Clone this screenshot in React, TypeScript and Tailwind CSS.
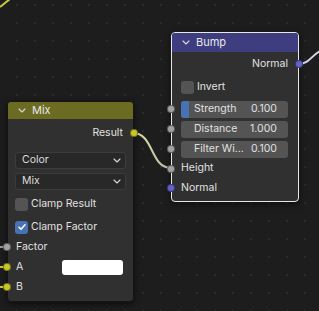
import React from "react";

const Chevron = () => (
  <svg width="8" height="5" viewBox="0 0 8 5" fill="none">
    <path d="M1 1l3 3 3-3" stroke="#d8d8d8" strokeWidth="1.1" strokeLinecap="round" strokeLinejoin="round" />
  </svg>
);

const Socket = ({ color, side }: { color: string; side: "l" | "r" }) => (
  <span
    className={`absolute top-1/2 -translate-y-1/2 size-[8px] rounded-full border border-black/40 ${
      side === "l" ? "-left-[5px]" : "-right-[5px]"
    }`}
    style={{ background: color }}
  />
);

const Field = ({ label, value, bar }: { label: string; value: string; bar?: boolean }) => (
  <div className="relative h-[20px] flex items-center">
    <Socket color="#a1a1a1" side="l" />
    <div className="ml-[9px] w-[107px] h-[17px] rounded-[3px] bg-[#545454] flex items-center overflow-hidden">
      <div className={`h-full w-[8px] ${bar ? "bg-[#4772b3]" : ""}`} />
      <span className="ml-[5px] flex-1 text-[#e0e0e0]">{label}</span>
      <span className="mr-[11px] text-[#e0e0e0]">{value}</span>
    </div>
  </div>
);

const Dropdown = ({ label }: { label: string }) => (
  <div className="mx-[7px] h-[17px] rounded-[3px] bg-[#282828] border border-[#3c3c3c] flex items-center justify-between pl-[6px] pr-[4px]">
    <span className="text-[#dcdcdc]">{label}</span>
    <Chevron />
  </div>
);

export default function App() {
  return (
    <div
      className="relative w-[319px] h-[311px] overflow-hidden bg-[#1d1d1d] bg-[radial-gradient(circle,#2b2b2b_0.8px,transparent_1.2px)] bg-size-[18px_18px] bg-position-[8px_-4px] text-[10.5px] leading-none"
      style={{ fontFamily: "Inter, 'DejaVu Sans', sans-serif" }}
    >
      <svg className="absolute inset-0" width="319" height="311">
        <defs>
          <linearGradient id="lk" x1="0" y1="0" x2="1" y2="0">
            <stop offset="0" stopColor="#e0e0a0" />
            <stop offset="1" stopColor="#b8b8b0" />
          </linearGradient>
        </defs>
        <path d="M0 7 L10 -1" stroke="#c8c83a" strokeWidth="2" />
        <path d="M133 133 C154 133 150 168 171 168" stroke="url(#lk)" strokeWidth="2" fill="none" />
        <path d="M298 64 C310 64 312 54 322 50" stroke="#d6d6ee" strokeWidth="2" fill="none" />
        <path d="M-2 247 L8 247" stroke="#9a9a9a" strokeWidth="2" />
        <path d="M-2 267 L8 267" stroke="#c8c83a" strokeWidth="2" />
        <path d="M-2 287 L8 287" stroke="#c8c83a" strokeWidth="2" />
      </svg>

      {/* Bump node */}
      <div className="absolute left-[171px] top-[32px] w-[128px] h-[170px] rounded-[4px] border border-[#e8e8e8] bg-[#303030] shadow-[0_2px_6px_rgba(0,0,0,0.6)]">
        <div className="h-[19px] rounded-t-[3px] bg-[#3d3d80] flex items-center pl-[10px] gap-[6px] text-[#e8e8e8] text-[11px]">
          <Chevron />
          <span>Bump</span>
        </div>
        <div className="relative h-[24px] flex items-center justify-end pr-[10px] text-[#e0e0e0]">
          Normal
          <Socket color="#6363c7" side="r" />
        </div>
        <div className="h-[23px] flex items-center pl-[9px] gap-[3px] text-[#e0e0e0]">
          <span className="size-[13px] rounded-[3px] bg-[#545454]" />
          Invert
        </div>
        <Field label="Strength" value="0.100" bar />
        <Field label="Distance" value="1.000" />
        <Field label="Filter Wi..." value="0.100" />
        <div className="relative h-[19px] flex items-center pl-[9px] text-[#e0e0e0]">
          <Socket color="#a1a1a1" side="l" />
          Height
        </div>
        <div className="relative h-[20px] flex items-center pl-[9px] text-[#e0e0e0]">
          <Socket color="#6363c7" side="l" />
          Normal
        </div>
      </div>

      {/* Mix node */}
      <div className="absolute left-[7px] top-[101px] w-[127px] h-[201px] rounded-[4px] border border-[#151515] bg-[#303030] shadow-[0_2px_6px_rgba(0,0,0,0.6)]">
        <div className="h-[17px] rounded-t-[3px] bg-[#6b6b22] flex items-center pl-[10px] gap-[6px] text-[#e8e8e8] text-[11px]">
          <Chevron />
          <span>Mix</span>
        </div>
        <div className="relative h-[28px] flex items-center justify-end pr-[10px] text-[#e0e0e0]">
          Result
          <Socket color="#c7c729" side="r" />
        </div>
        <div className="h-[5px]" />
        <Dropdown label="Color" />
        <div className="h-[4px]" />
        <Dropdown label="Mix" />
        <div className="h-[7px]" />
        <div className="h-[14px] flex items-center pl-[7px] gap-[3px] text-[#e0e0e0]">
          <span className="size-[13px] rounded-[3px] bg-[#545454]" />
          Clamp Result
        </div>
        <div className="h-[9px]" />
        <div className="h-[14px] flex items-center pl-[7px] gap-[3px] text-[#e0e0e0]">
          <span className="size-[13px] rounded-[3px] bg-[#4772b3] flex items-center justify-center">
            <svg width="10" height="10" viewBox="0 0 10 10" fill="none">
              <path d="M2 5.2l2 2 4-4.5" stroke="white" strokeWidth="1.5" strokeLinecap="round" strokeLinejoin="round" />
            </svg>
          </span>
          Clamp Factor
        </div>
        <div className="h-[3px]" />
        <div className="relative h-[20px] flex items-center pl-[8px] text-[#e0e0e0]">
          <Socket color="#a1a1a1" side="l" />
          Factor
        </div>
        <div className="relative h-[20px] flex items-center pl-[8px] text-[#e0e0e0]">
          <Socket color="#c7c729" side="l" />
          <span className="flex-1">A</span>
          <span className="mr-[10px] w-[61px] h-[15px] rounded-[3px] bg-white" />
        </div>
        <div className="relative h-[20px] flex items-center pl-[8px] text-[#e0e0e0]">
          <Socket color="#c7c729" side="l" />
          B
        </div>
      </div>
    </div>
  );
}
